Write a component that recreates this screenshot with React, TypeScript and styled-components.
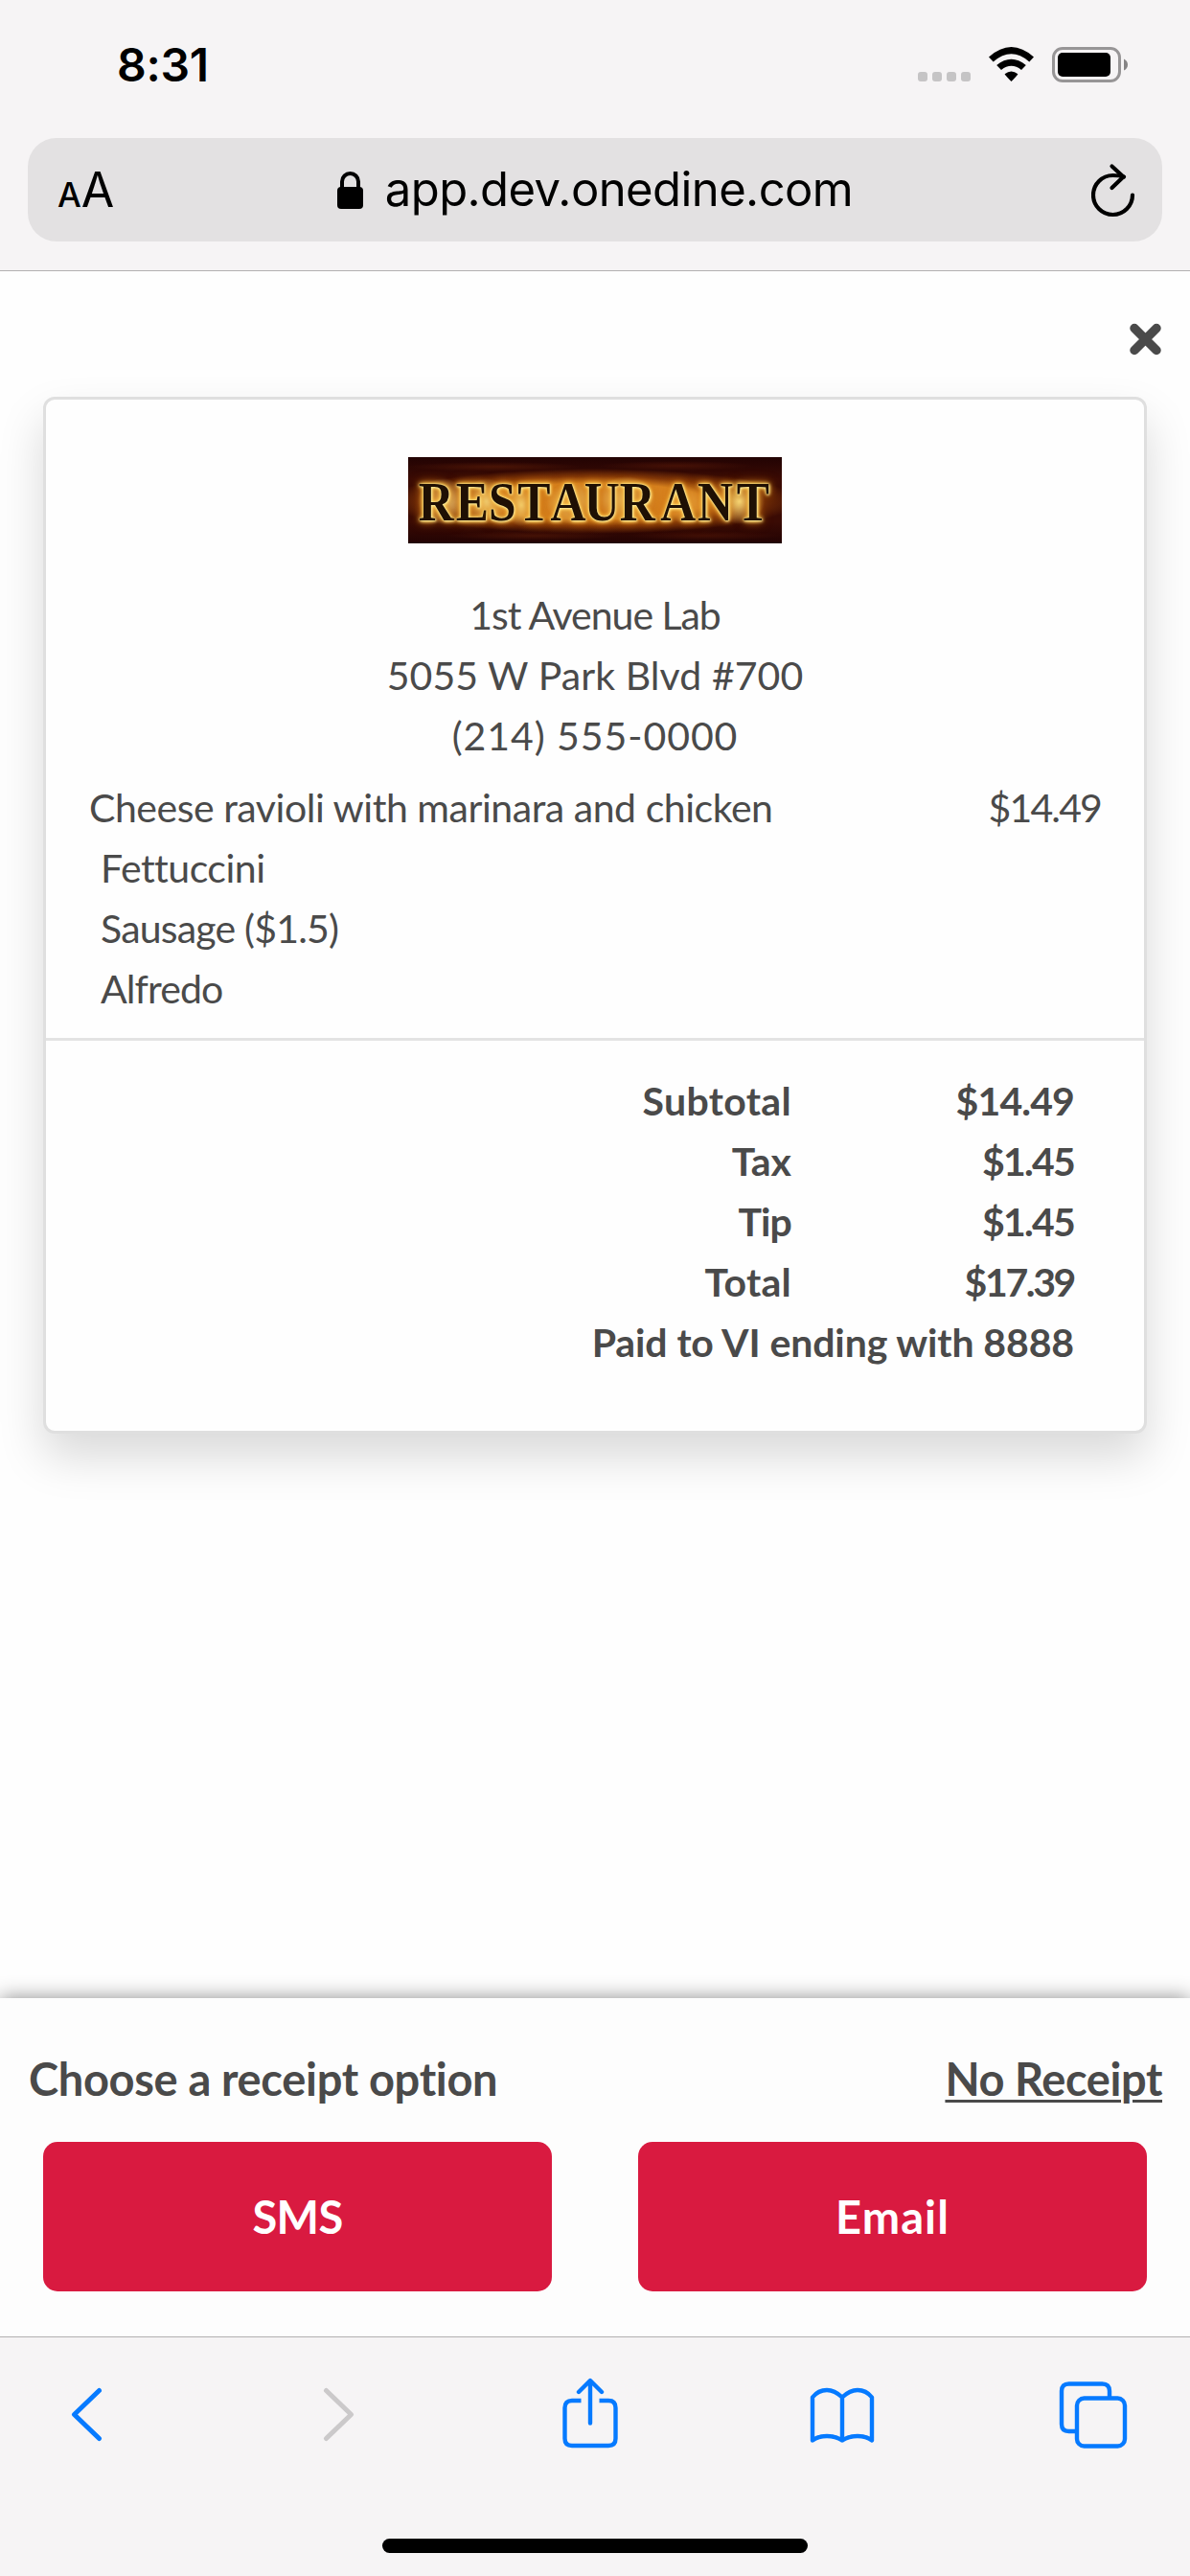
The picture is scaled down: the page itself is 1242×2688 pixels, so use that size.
import React from 'react';
import styled, { createGlobalStyle } from 'styled-components';

const INK = '#4a4a4a';
const BRAND = '#d91a40';
const IOS_BLUE = '#067aff';
const CHROME = '#f6f4f5';

const GlobalStyle = createGlobalStyle`
  * { box-sizing: border-box; }
  body { margin: 0; background: #fefefe; }
`;

const Screen = styled.div`
  width: 1242px;
  height: 2688px;
  display: flex;
  flex-direction: column;
  overflow: hidden;
  background: #fefefe;
  color: ${INK};
  font-family: Lato, 'Open Sans', sans-serif;
`;

/* ---------- browser chrome, top ---------- */

const TopChrome = styled.header`
  height: 283px;
  flex: none;
  background: ${CHROME};
  border-bottom: 1px solid #b2b0b1;
  color: #000;
  font-family: Inter, 'Liberation Sans', sans-serif;
`;

const StatusBar = styled.div`
  height: 144px;
  display: flex;
  justify-content: space-between;
  padding: 39px 65px 0 122px;
`;

const Clock = styled.span`
  font-size: 48px;
  font-weight: 600;
  line-height: 58px;
  letter-spacing: -0.3px;
`;

const StatusIcons = styled.div`
  display: flex;
  align-items: flex-start;
  padding-top: 10px;
`;

const SignalDots = styled.div`
  display: flex;
  gap: 5px;
  padding-top: 26px;
  margin-right: 19px;
`;

const Dot = styled.i`
  width: 10px;
  height: 10px;
  border-radius: 3px;
  background: #c5c4c5;
`;

const WifiIcon = styled.svg`
  margin-right: 19px;
`;

const AddressBar = styled.div`
  height: 108px;
  margin: 0 29px;
  padding: 0 28px 0 31px;
  display: flex;
  align-items: center;
  justify-content: space-between;
  border-radius: 30px;
  background: #e3e1e2;
`;

const TextSize = styled.span`
  display: flex;
  align-items: baseline;
  width: 60px;
  padding-top: 4px;
  font-size: 50px;
  line-height: 60px;
  letter-spacing: -1px;
`;

const SmallA = styled.span`
  font-size: 35px;
  font-weight: 500;
  margin-right: 1px;
`;

const Address = styled.div`
  display: flex;
  align-items: center;
  margin-right: 17px;
`;

const Url = styled.span`
  margin-left: 23px;
  font-size: 49px;
  line-height: 60px;
  letter-spacing: -0.58px;
`;

/* ---------- receipt ---------- */

const Page = styled.main`
  flex: 1;
  display: flex;
  flex-direction: column;
`;

const CloseRow = styled.div`
  display: flex;
  justify-content: flex-end;
  padding: 54px 30px 43px 0;
`;

const Card = styled.section`
  margin: 0 45px;
  height: 1082px;
  border: 3px solid #dfdfdf;
  border-radius: 12px;
  box-shadow: 0 24px 48px rgba(0, 0, 0, 0.15);
  background: #fefefe;
`;

const Sign = styled.div`
  width: 390px;
  height: 90px;
  margin: 60px auto 43px;
  overflow: hidden;
  background:
    radial-gradient(ellipse 26px 24px at 36px 46px, #fff0a0, transparent),
    radial-gradient(ellipse 24px 24px at 82px 46px, #ffe88a, transparent),
    radial-gradient(ellipse 20px 22px at 118px 50px, #ffe07a, transparent),
    radial-gradient(ellipse 28px 22px at 172px 48px, #ffe480, transparent),
    radial-gradient(ellipse 30px 24px at 228px 44px, #ffec90, transparent),
    radial-gradient(ellipse 20px 20px at 290px 50px, #f8bc50, transparent),
    radial-gradient(ellipse 26px 24px at 346px 46px, #ffe480, transparent),
    radial-gradient(ellipse 215px 34px at 193px 46px, #d98420 55%, rgba(160, 74, 10, 0.7) 76%, transparent),
    radial-gradient(ellipse 90px 5px at 90px 10px, rgba(104, 34, 8, 0.5), transparent),
    radial-gradient(ellipse 80px 5px at 280px 9px, rgba(96, 28, 8, 0.5), transparent),
    radial-gradient(ellipse 90px 5px at 130px 82px, rgba(96, 30, 8, 0.5), transparent),
    radial-gradient(ellipse 80px 5px at 310px 82px, rgba(88, 24, 6, 0.5), transparent),
    linear-gradient(#220303, #3a0b04 25%, #3a0b04 75%, #220303);
`;

const SignText = styled.div`
  width: 433px;
  padding-left: 12px;
  transform: scaleX(0.9);
  transform-origin: 0 0;
  font-family: 'Liberation Serif', serif;
  font-size: 57px;
  font-weight: 700;
  line-height: 93px;
  white-space: nowrap;
  color: #1f1004;
  text-shadow:
    0 0 2px #fff3a8,
    1px 1px 3px #ffeb94,
    0 0 5px #ffd45c,
    0 0 6px #ffc648,
    0 0 9px #f9a428,
    0 0 14px #a64a08;
`;

const SignLetter = styled.span<{ $gap: number }>`
  letter-spacing: ${(p) => p.$gap}px;
`;

const Line = styled.div<{ $track?: number }>`
  font-size: 41px;
  line-height: 63px;
  white-space: nowrap;
  letter-spacing: ${(p) => p.$track ?? 0}px;
`;

const Venue = styled.div`
  text-align: center;
  height: 189px;
`;

const Items = styled.div`
  padding: 12px 45px 20px 45px;
  border-bottom: 3px solid #e3e3e3;
`;

const ItemRow = styled.div`
  display: flex;
  justify-content: space-between;
`;

const Modifiers = styled.div`
  padding-left: 12px;
`;

const Totals = styled.div`
  padding: 31px 73px 0 0;
  font-weight: 700;
`;

const TotalRow = styled.div`
  display: flex;
  justify-content: flex-end;
`;

const Amount = styled.div`
  width: 295px;
  display: flex;
  justify-content: flex-end;
`;

/* ---------- receipt option footer ---------- */

const Footer = styled.footer`
  height: 353px;
  flex: none;
  background: #fdfdfd;
  box-shadow: 0 0 20px rgba(0, 0, 0, 0.46);
`;

const Prompt = styled.div`
  display: flex;
  justify-content: space-between;
  padding: 54px 29px 0 30px;
  height: 150px;
  font-size: 47px;
  font-weight: 700;
  line-height: 60px;
`;

const PromptText = styled.span`
  letter-spacing: -0.33px;
`;

const NoReceipt = styled.a`
  letter-spacing: -0.42px;
  text-decoration: underline;
  text-decoration-thickness: 3px;
  text-underline-offset: 4px;
`;

const Choices = styled.div`
  display: grid;
  grid-template-columns: 531px 531px;
  column-gap: 90px;
  padding: 0 45px;
`;

const Choice = styled.button<{ $track: number }>`
  height: 156px;
  padding: 0;
  border: 0;
  border-radius: 15px;
  background: ${BRAND};
  color: #fff;
  font-family: inherit;
  font-size: 47px;
  font-weight: 700;
  letter-spacing: ${(p) => p.$track}px;
`;

/* ---------- browser chrome, bottom ---------- */

const Toolbar = styled.nav`
  position: relative;
  z-index: 1;
  height: 250px;
  flex: none;
  display: flex;
  flex-direction: column;
  justify-content: space-between;
  align-items: center;
  padding: 42px 0 24px;
  background: ${CHROME};
  border-top: 1px solid #b2b0b1;
`;

const Tools = styled.div`
  width: 1242px;
  display: flex;
  justify-content: space-between;
  padding: 0 63px 0 53px;
`;

const Tool = styled.div`
  width: 76px;
  display: flex;
  justify-content: center;
`;

const HomeBar = styled.div`
  width: 444px;
  height: 15px;
  border-radius: 8px;
  background: #000;
`;

const letters: [string, number][] = [
  ['R', 2], ['E', 0], ['S', 2], ['T', 0], ['A', -2],
  ['U', 0], ['R', 6], ['A', 2], ['N', 4], ['T', 0],
];

const venue: [string, number][] = [
  ['1st Avenue Lab', -1.03],
  ['5055 W Park Blvd #700', 0.08],
  ['(214) 555-0000', 0.95],
];

const modifiers: [string, number][] = [
  ['Fettuccini', -0.5],
  ['Sausage ($1.5)', -0.8],
  ['Alfredo', -0.9],
];

const totals: { label: string; track: number; value: string; valueTrack: number }[] = [
  { label: 'Subtotal', track: 0.35, value: '$14.49', valueTrack: -0.87 },
  { label: 'Tax', track: 0, value: '$1.45', valueTrack: -1.77 },
  { label: 'Tip', track: -0.91, value: '$1.45', valueTrack: -1.77 },
  { label: 'Total', track: 0.28, value: '$17.39', valueTrack: -2.37 },
];

const stroke = {
  fill: 'none',
  stroke: IOS_BLUE,
  strokeWidth: 4.4,
  strokeLinecap: 'round' as const,
  strokeLinejoin: 'round' as const,
};

export default function App() {
  return (
    <Screen>
      <GlobalStyle />
      <TopChrome>
        <StatusBar>
          <Clock>8:31</Clock>
          <StatusIcons>
            <SignalDots>
              <Dot /><Dot /><Dot /><Dot />
            </SignalDots>
            <WifiIcon width="47" height="37" viewBox="0 0 47 37">
              <path d="M0 10.5 Q23.5 -10.5 47 10.5 L42.3 15.4 Q23.5 -1 4.7 15.4 Z" />
              <path d="M8.2 19 Q23.5 6.3 38.8 19 L34 24 Q23.5 15.6 13 24 Z" />
              <path d="M16.6 28.2 Q23.5 23 30.4 28.2 Q30.4 29 23.5 36 Q16.6 29 16.6 28.2 Z" />
            </WifiIcon>
            <svg width="79" height="37" viewBox="0 0 79 37">
              <rect x="1.5" y="1.5" width="69" height="34" rx="9.5" fill={CHROME} stroke="#979596" strokeWidth="3" />
              <rect x="6" y="6" width="55" height="25" rx="5" />
              <path d="M75 12.5 Q79 14.5 79 18.5 Q79 22.5 75 24.5 Z" fill="#868485" />
            </svg>
          </StatusIcons>
        </StatusBar>
        <AddressBar>
          <TextSize>
            <SmallA>A</SmallA>
            <span>A</span>
          </TextSize>
          <Address>
            <svg width="27" height="39" viewBox="0 0 27 39">
              <rect x="0" y="16" width="27" height="23" rx="4" />
              <path d="M5 18 V10.5 A8.5 8.5 0 0 1 22 10.5 V18" fill="none" stroke="#000" strokeWidth="4" />
            </svg>
            <Url>app.dev.onedine.com</Url>
          </Address>
          <svg width="46" height="58" viewBox="0 0 46 58" fill="none" stroke="#000" strokeWidth="4.2" strokeLinecap="round" strokeLinejoin="round">
            <path d="M43 34.5 A20.5 20.5 0 1 1 22.5 14 Q29 14 34 15.5" />
            <path d="M21.5 4.5 L33.5 15.5 L21.5 27" />
          </svg>
        </AddressBar>
      </TopChrome>

      <Page>
        <CloseRow>
          <svg width="33" height="34" viewBox="0 0 33 34">
            <path d="M5 5.5 L28 28.5 M28 5.5 L5 28.5" stroke={INK} strokeWidth="9.5" strokeLinecap="round" />
          </svg>
        </CloseRow>
        <Card>
          <Sign>
            <SignText>
              {letters.map(([ch, gap], i) => (
                <SignLetter key={i} $gap={gap}>{ch}</SignLetter>
              ))}
            </SignText>
          </Sign>
          <Venue>
            {venue.map(([text, track]) => (
              <Line key={text} $track={track}>{text}</Line>
            ))}
          </Venue>
          <Items>
            <ItemRow>
              <Line $track={-0.46}>Cheese ravioli with marinara and chicken</Line>
              <Line $track={-1.86}>$14.49</Line>
            </ItemRow>
            <Modifiers>
              {modifiers.map(([text, track]) => (
                <Line key={text} $track={track}>{text}</Line>
              ))}
            </Modifiers>
          </Items>
          <Totals>
            {totals.map((t) => (
              <TotalRow key={t.label}>
                <Line $track={t.track}>{t.label}</Line>
                <Amount>
                  <Line $track={t.valueTrack}>{t.value}</Line>
                </Amount>
              </TotalRow>
            ))}
            <TotalRow>
              <Line $track={-0.11}>Paid to VI ending with 8888</Line>
            </TotalRow>
          </Totals>
        </Card>
      </Page>

      <Footer>
        <Prompt>
          <PromptText>Choose a receipt option</PromptText>
          <NoReceipt>No Receipt</NoReceipt>
        </Prompt>
        <Choices>
          <Choice $track={-0.6}>SMS</Choice>
          <Choice $track={1.1}>Email</Choice>
        </Choices>
      </Footer>

      <Toolbar>
        <Tools>
          <Tool>
            <svg width="38" height="76" viewBox="0 0 38 76">
              <path {...stroke} strokeWidth="5" d="M31.5 13.5 L5.5 38.5 L31.5 63.5" />
            </svg>
          </Tool>
          <Tool>
            <svg width="38" height="76" viewBox="0 0 38 76">
              <path {...stroke} stroke="#cbc9ca" strokeWidth="5" d="M5.5 13.5 L31.5 38.5 L5.5 63.5" />
            </svg>
          </Tool>
          <Tool>
            <svg width="60" height="76" viewBox="0 0 60 76">
              <path {...stroke} d="M30 3.5 V47.5 M18 15 L30 3 L42 15" />
              <path {...stroke} strokeLinecap="butt" d="M20.5 24 H11 Q3.5 24 3.5 31.5 V63.5 Q3.5 71 11 71 H49 Q56.5 71 56.5 63.5 V31.5 Q56.5 24 49 24 H39.5" />
            </svg>
          </Tool>
          <Tool>
            <svg width="70" height="76" viewBox="0 0 70 76">
              <path {...stroke} d="M35 20.5 Q27 13 19 13 Q10 13 4 20.5 V65.5 Q10 61 19 61 Q28 61 35 65.5 Q42 61 51 61 Q60 61 66 65.5 V20.5 Q60 13 51 13 Q43 13 35 20.5 Z M35 20.5 V65.5" />
            </svg>
          </Tool>
          <Tool>
            <svg width="74" height="76" viewBox="0 0 74 76">
              <path {...stroke} strokeLinecap="butt" d="M54 21 V14 Q54 6.5 46.5 6.5 H11.5 Q4 6.5 4 14 V48.5 Q4 56 11.5 56 H20" />
              <rect {...stroke} x="20" y="21.5" width="50" height="50" rx="7.5" />
            </svg>
          </Tool>
        </Tools>
        <HomeBar />
      </Toolbar>
    </Screen>
  );
}
